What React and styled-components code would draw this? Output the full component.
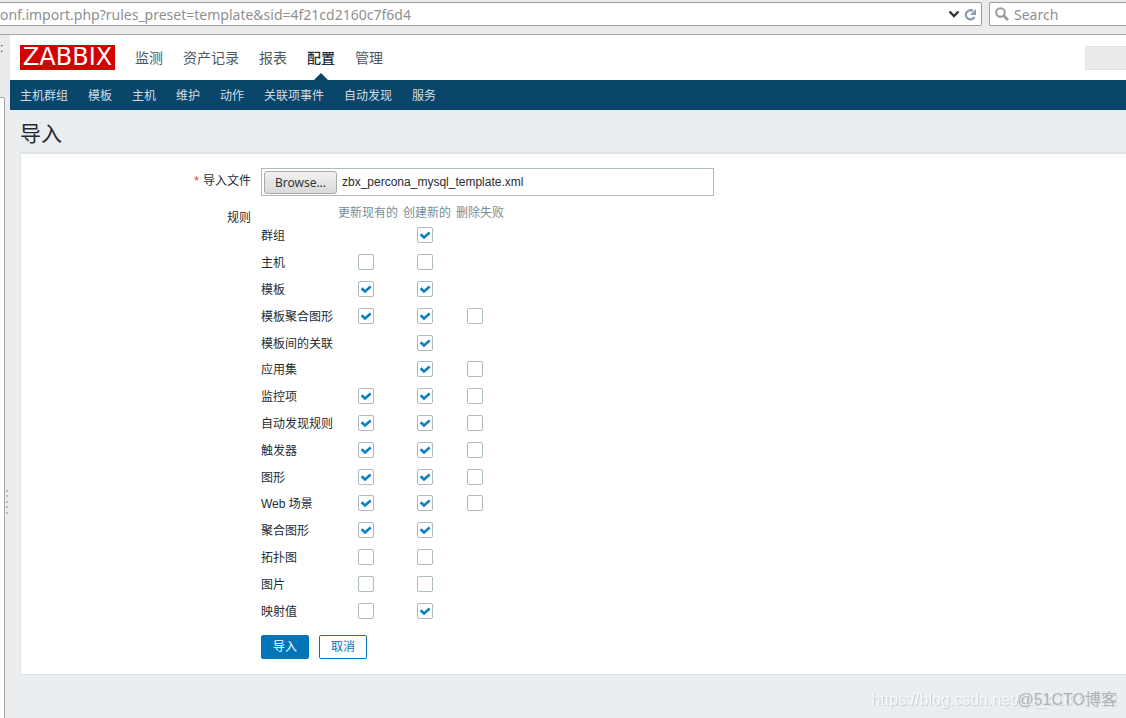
import { useRef, useState } from 'react';
import styled, { createGlobalStyle } from 'styled-components';

const GlobalStyle = createGlobalStyle`
  * {
    box-sizing: border-box;
  }
  html, body, #root {
    height: 100%;
  }
  body {
    margin: 0;
    overflow: hidden;
    background: #ebeef0;
    color: #1f2c33;
    font-family: "Liberation Sans", "Noto Sans CJK SC", sans-serif;
    font-size: 12px;
    line-height: 18px;
  }
`;

const Window = styled.div`
  height: 100%;
  display: flex;
  flex-direction: column;
`;

const BrowserBar = styled.div`
  display: flex;
  gap: 7px;
  height: 35px;
  padding: 2px 0 8px;
  background: #ebebeb;
  border-bottom: 1px solid #a5a5a5;
`;

const AddressBox = styled.div`
  flex: 1;
  display: flex;
  align-items: center;
  gap: 4px;
  padding-right: 4px;
  background: #fff;
  border: 1px solid #9d9d9d;
  border-left: 0;
  border-radius: 0 2px 2px 0;
`;

const BarInput = styled.input`
  flex: 1;
  min-width: 0;
  padding: 2px 0 0;
  border: 0;
  outline: 0;
  background: none;
  color: #8f8f8f;
  font-family: "Noto Sans", sans-serif;
  font-size: 14px;
  line-height: 20px;

  &::placeholder {
    color: #8f8f8f;
    opacity: 1;
  }
`;

const IconButton = styled.button`
  display: flex;
  padding: 0;
  border: 0;
  background: none;
`;

const SearchBox = styled.div`
  width: 137px;
  display: flex;
  align-items: center;
  gap: 5px;
  padding-left: 5px;
  background: #fff;
  border: 1px solid #9d9d9d;
  border-right: 0;
  border-radius: 2px 0 0 2px;
`;

const Body = styled.div`
  flex: 1;
  min-height: 0;
  display: flex;
`;

const Sidebar = styled.div`
  width: 10px;
  display: flex;
  flex-direction: column;
  background: #ebebeb;
`;

const SidebarTab = styled.div`
  height: 62px;
  padding-top: 4px;
  overflow: hidden;
  color: #333;
`;

const SidebarPanel = styled.div`
  flex: 1;
  display: flex;
  align-items: center;
  background: linear-gradient(90deg, #ebebeb 5px, #ebeef0 10px);
`;

const SidebarEdge = styled.div`
  width: 5px;
  height: 100%;
  background: #fff;
  border: 1px solid #a5a5a5;
  border-width: 1px 1px 0 0;
  border-radius: 0 2px 0 0;
`;

const Grip = styled.svg`
  margin: 190px 0 0 1px;
`;

const Page = styled.div`
  flex: 1;
  min-width: 0;
`;

const Header = styled.header`
  display: flex;
  align-items: center;
  height: 45px;
  padding-left: 10px;
  background: #fff;
`;

const Logo = styled.a`
  width: 95px;
  height: 25px;
  display: flex;
  align-items: center;
  justify-content: center;
  background: #d40000;
  color: #fff;
  font-family: "DejaVu Sans", sans-serif;
  font-size: 24px;
  line-height: 25px;
  text-decoration: none;
`;

const MainNav = styled.nav`
  flex: 1;
  display: flex;
  gap: 20px;
  height: 100%;
  margin-left: 20px;
`;

const MainLink = styled.a`
  position: relative;
  display: flex;
  align-items: center;
  color: ${({ $active }) => ($active ? '#1f2c33' : '#4d5960')};
  font-size: 14px;
  font-weight: ${({ $active }) => ($active ? 500 : 400)};
  text-decoration: none;

  &::after {
    content: "";
    display: ${({ $active }) => ($active ? 'block' : 'none')};
    position: absolute;
    bottom: 0;
    left: 50%;
    margin-left: -7px;
    border: 7px solid transparent;
    border-top: 0;
    border-bottom-color: #0a466a;
  }
`;

const HeaderSearch = styled.input`
  width: 41px;
  height: 24px;
  border: 1px solid #e3e3e3;
  border-right: 0;
  background: #ebebeb;
`;

const SubNav = styled.nav`
  display: flex;
  align-items: center;
  gap: 20px;
  height: 30px;
  padding: 2px 10px 0;
  background: #0a466a;
`;

const SubLink = styled.a`
  color: #d2dde4;
  text-decoration: none;
`;

const Title = styled.h1`
  margin: 0;
  padding: 10px 10px 4px;
  font-size: 21px;
  font-weight: 400;
  line-height: 28px;
`;

const Panel = styled.form`
  margin-left: 10px;
  padding: 14px 0 15px;
  background: #fff;
  border: 1px solid #dfe4e7;
  border-width: 2px 0 1px 1px;
`;

const FormRow = styled.div`
  display: grid;
  grid-template-columns: 230px 1fr;
  column-gap: 10px;
`;

const RowLabel = styled.label`
  padding-top: ${({ $top }) => $top}px;
  text-align: right;
`;

const Required = styled.span`
  margin-right: 4px;
  color: #e33734;
`;

const FileField = styled.div`
  width: 453px;
  max-width: 100%;
  height: 28px;
  display: flex;
  align-items: center;
  gap: 5px;
  padding: 0 2px;
  border: 1px solid #acbbc2;
`;

const BrowseButton = styled.button`
  width: 73px;
  height: 23px;
  padding: 0;
  border: 1px solid #aaa;
  border-radius: 3px;
  background: linear-gradient(#f2f2f2, #d9d9d9);
  color: #333;
  font-family: "Noto Sans", sans-serif;
  font-size: 12px;
`;

const Rules = styled.table`
  height: 420px;
  margin-top: 8px;
  border-collapse: collapse;

  th, td {
    padding: 0;
    text-align: center;
    font-weight: 400;
  }
  thead th {
    height: 18px;
    padding-left: 5px;
    color: #768d99;
    white-space: nowrap;
  }
  tbody th {
    padding-top: 2px;
    text-align: left;
    white-space: nowrap;
  }
  tbody td:last-child {
    padding-right: 5px;
  }
  tbody tr {
    height: 26px;
  }
`;

const Col = styled.col`
  width: ${({ $width }) => $width}px;
`;

const Checkbox = styled.input`
  appearance: none;
  display: block;
  width: 16px;
  height: 16px;
  margin: 0 auto;
  border: 1px solid #acbbc2;
  border-radius: 2px;
  background: #fff;

  &:checked {
    background: #fff url("data:image/svg+xml,%3Csvg xmlns='http://www.w3.org/2000/svg' width='14' height='14'%3E%3Cpath d='M2.600 6.200l3.400 3.300 5.700-5' fill='none' stroke='%230f7fc4' stroke-width='2.600'/%3E%3C/svg%3E") center no-repeat;
  }
`;

const Actions = styled.div`
  display: flex;
  gap: 10px;
  margin: 11px 0 0 240px;
`;

const Button = styled.button`
  width: 48px;
  height: 24px;
  padding: 0;
  border: 1px solid #0275b8;
  border-radius: 2px;
  background: ${({ $primary }) => ($primary ? '#0275b8' : '#fff')};
  color: ${({ $primary }) => ($primary ? '#fff' : '#0275b8')};
  font-family: inherit;
  font-size: 12px;
  line-height: 18px;
`;

const Watermark = styled.div`
  position: fixed;
  right: 9px;
  bottom: 8px;
  color: ${({ $color }) => $color};
  font-size: 16px;
  line-height: 20px;
  text-shadow: 1px 1px 1px ${({ $shadow }) => $shadow};
  pointer-events: none;
`;

const mainMenu = ['监测', '资产记录', '报表', '配置', '管理'];
const subMenu = ['主机群组', '模板', '主机', '维护', '动作', '关联项事件', '自动发现', '服务'];
const columns = ['更新现有的', '创建新的', '删除失败'];

// one entry per column: true/false is the default state, null means no checkbox
const rules = [
  { name: '群组', values: [null, true, null] },
  { name: '主机', values: [false, false, null] },
  { name: '模板', values: [true, true, null] },
  { name: '模板聚合图形', values: [true, true, false] },
  { name: '模板间的关联', values: [null, true, null] },
  { name: '应用集', values: [null, true, false] },
  { name: '监控项', values: [true, true, false] },
  { name: '自动发现规则', values: [true, true, false] },
  { name: '触发器', values: [true, true, false] },
  { name: '图形', values: [true, true, false] },
  { name: 'Web 场景', values: [true, true, false] },
  { name: '聚合图形', values: [true, true, null] },
  { name: '拓扑图', values: [false, false, null] },
  { name: '图片', values: [false, false, null] },
  { name: '映射值', values: [false, true, null] },
];

const Browser = () => (
  <BrowserBar>
    <AddressBox>
      <BarInput aria-label="Address" defaultValue="onf.import.php?rules_preset=template&sid=4f21cd2160c7f6d4" />
      <IconButton aria-label="History">
        <svg width="12" height="12" fill="none" stroke="#2e3436" strokeWidth="2.4">
          <path d="M1.500 3.500L6 8l4.500-4.500" />
        </svg>
      </IconButton>
      <IconButton aria-label="Reload">
        <svg width="13" height="13" fill="none" stroke="#8b9bab" strokeWidth="2.2">
          <path d="M9 3A4.600 4.600 0 1 0 10.500 9" />
          <path d="M12 1v6H6z" fill="#8b9bab" stroke="none" />
        </svg>
      </IconButton>
    </AddressBox>
    <SearchBox>
      <svg width="14" height="14" fill="none" stroke="#999" strokeWidth="2">
        <circle cx="5.500" cy="5.500" r="4.300" />
        <path d="M8.500 8.500l4.500 4.500" strokeWidth="2.600" />
      </svg>
      <BarInput aria-label="Search" placeholder="Search" />
    </SearchBox>
  </BrowserBar>
);

const ImportForm = () => {
  const fileInput = useRef(null);
  const [fileName, setFileName] = useState('zbx_percona_mysql_template.xml');

  return (
    <Panel onSubmit={(e) => e.preventDefault()}>
      <FormRow>
        <RowLabel $top={4} htmlFor="import_file">
          <Required>*</Required>导入文件
        </RowLabel>
        <FileField>
          <input
            ref={fileInput}
            id="import_file"
            type="file"
            hidden
            onChange={(e) => e.target.files[0] && setFileName(e.target.files[0].name)}
          />
          <BrowseButton type="button" onClick={() => fileInput.current.click()}>Browse...</BrowseButton>
          <span>{fileName}</span>
        </FileField>
      </FormRow>
      <FormRow>
        <RowLabel as="div" id="rules_label" $top={13}>规则</RowLabel>
        <div>
          <Rules aria-labelledby="rules_label">
            <colgroup>
              <Col $width={72} />
              <Col $width={65} />
              <Col $width={53} />
              <Col $width={53} />
            </colgroup>
            <thead>
              <tr>
                <td />
                {columns.map((name) => <th key={name} scope="col">{name}</th>)}
              </tr>
            </thead>
            <tbody>
              {rules.map(({ name, values }) => (
                <tr key={name}>
                  <th scope="row">{name}</th>
                  {values.map((checked, i) => (
                    <td key={columns[i]}>
                      {checked !== null && (
                        <Checkbox type="checkbox" defaultChecked={checked} aria-label={`${name} ${columns[i]}`} />
                      )}
                    </td>
                  ))}
                </tr>
              ))}
            </tbody>
          </Rules>
        </div>
      </FormRow>
      <Actions>
        <Button type="submit" $primary>导入</Button>
        <Button type="button">取消</Button>
      </Actions>
    </Panel>
  );
};

const App = () => (
  <Window>
    <GlobalStyle />
    <Browser />
    <Body>
      <Sidebar>
        <SidebarTab>:</SidebarTab>
        <SidebarPanel>
          <SidebarEdge />
          <Grip width="3" height="26" fill="#bbb">
            {[0, 5, 11, 16, 22].map((y) => <rect key={y} y={y} width="2" height="2" />)}
          </Grip>
        </SidebarPanel>
      </Sidebar>
      <Page>
        <Header>
          <Logo href="#">ZABBIX</Logo>
          <MainNav>
            {mainMenu.map((item) => (
              <MainLink key={item} href="#" $active={item === '配置'}>{item}</MainLink>
            ))}
          </MainNav>
          <HeaderSearch aria-label="搜索" />
        </Header>
        <SubNav>
          {subMenu.map((item) => <SubLink key={item} href="#">{item}</SubLink>)}
        </SubNav>
        <Title>导入</Title>
        <ImportForm />
      </Page>
    </Body>
    <Watermark $color="#f6f8f9" $shadow="#c8cbcd">https://blog.csdn.net/qq_41830712</Watermark>
    <Watermark $color="#b0b3b5" $shadow="#dfe1e3">@51CTO博客</Watermark>
  </Window>
);

export default App;
